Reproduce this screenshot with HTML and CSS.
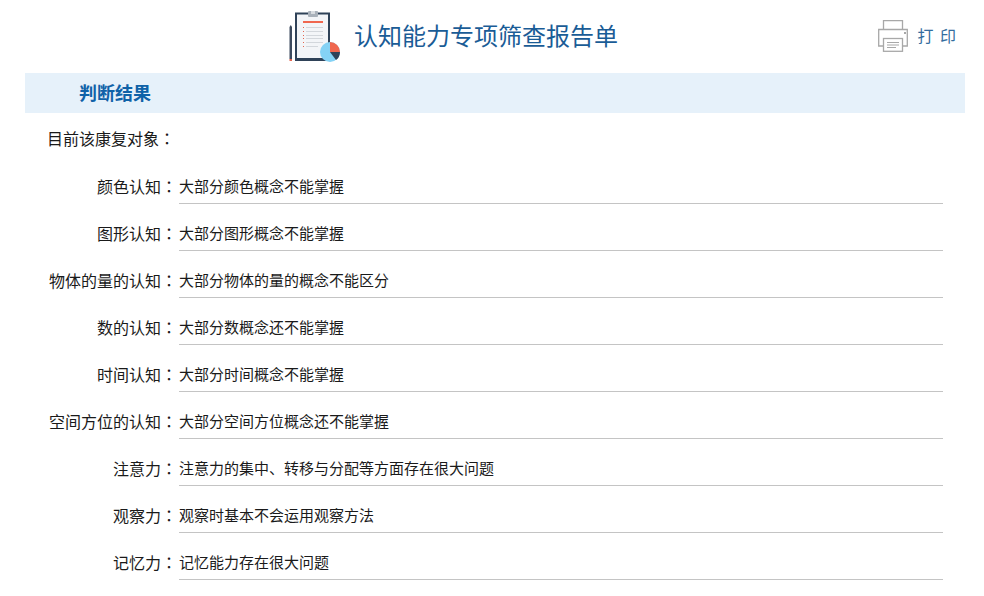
FILE: index.html
```html
<!DOCTYPE html>
<html lang="zh">
<head>
<meta charset="utf-8">
<title>认知能力专项筛查报告单</title>
<link rel="stylesheet" href="styles.css">
</head>
<body>
<header class="top">
  <svg class="logo" width="54" height="52" viewBox="0 10 54 52">
    <rect x="1.500" y="27" width="2.500" height="32" fill="#3c4a5e"/>
    <path d="M1.500 27 L2.800 25 L4 27Z" fill="#3c4a5e"/>
    <rect x="1.500" y="59" width="2.500" height="2" fill="#e2654f"/>
    <rect x="7" y="12.500" width="35" height="48.500" fill="#2f4258"/>
    <rect x="9" y="14.500" width="31" height="43.500" fill="#f3f5f8"/>
    <rect x="20" y="11" width="10" height="6" rx="1" fill="#a9b1ba"/>
    <rect x="23" y="11" width="4" height="3" fill="#d8dce0"/>
    <rect x="15" y="21" width="20" height="2" fill="#f0674f"/>
    <g fill="#e2654f">
      <rect x="15" y="27" width="1" height="1"/><rect x="15" y="31" width="1" height="1"/><rect x="15" y="35" width="1" height="1"/><rect x="15" y="38" width="1" height="1"/><rect x="15" y="42" width="1" height="1"/><rect x="15" y="46" width="1" height="1"/>
    </g>
    <g fill="#d3d7dc">
      <rect x="18" y="27" width="17" height="1"/><rect x="18" y="31" width="17" height="1"/><rect x="18" y="35" width="17" height="1"/><rect x="18" y="38" width="17" height="1"/><rect x="18" y="42" width="17" height="1"/><rect x="18" y="46" width="12" height="1"/>
    </g>
    <circle cx="42" cy="52" r="10" fill="#84d2f5"/>
    <path d="M42 52 L42 42 A10 10 0 0 1 52 52Z" fill="#f0674f"/>
    <path d="M42 52 L52 52 A10 10 0 0 1 48 60Z" fill="#2f4258"/>
  </svg>
  <h1 class="title">认知能力专项筛查报告单</h1>
  <div class="print">
    <svg class="print-icon" width="31" height="32" viewBox="0 0 31 32" fill="none" stroke="#a8a8a8" stroke-width="1.300">
      <path d="M5.500 9V.7H24.500V9"/>
      <path d="M5 26H.7V9.500H29.300V26H25"/>
      <rect x="5.500" y="18.500" width="19" height="12.800" fill="#fff"/>
      <path d="M9 22.500H21M9 25H21M9 27.500H18" stroke-width="1"/>
      <rect x="26" y="12" width="2" height="2" fill="#a8a8a8" stroke="none"/>
    </svg>
    <span class="print-text">打 印</span>
  </div>
</header>
<main class="report">
  <h2 class="banner">判断结果</h2>
  <p class="intro">目前该康复对象<span class="colon" lang="zh-Hant">：</span></p>
  <dl class="rows">
    <div class="row"><dt>颜色认知<span class="colon" lang="zh-Hant">：</span></dt><dd>大部分颜色概念不能掌握</dd></div>
    <div class="row"><dt>图形认知<span class="colon" lang="zh-Hant">：</span></dt><dd>大部分图形概念不能掌握</dd></div>
    <div class="row"><dt>物体的量的认知<span class="colon" lang="zh-Hant">：</span></dt><dd>大部分物体的量的概念不能区分</dd></div>
    <div class="row"><dt>数的认知<span class="colon" lang="zh-Hant">：</span></dt><dd>大部分数概念还不能掌握</dd></div>
    <div class="row"><dt>时间认知<span class="colon" lang="zh-Hant">：</span></dt><dd>大部分时间概念不能掌握</dd></div>
    <div class="row"><dt>空间方位的认知<span class="colon" lang="zh-Hant">：</span></dt><dd>大部分空间方位概念还不能掌握</dd></div>
    <div class="row"><dt>注意力<span class="colon" lang="zh-Hant">：</span></dt><dd>注意力的集中、转移与分配等方面存在很大问题</dd></div>
    <div class="row"><dt>观察力<span class="colon" lang="zh-Hant">：</span></dt><dd>观察时基本不会运用观察方法</dd></div>
    <div class="row"><dt>记忆力<span class="colon" lang="zh-Hant">：</span></dt><dd>记忆能力存在很大问题</dd></div>
  </dl>
</main>
</body>
</html>
```
FILE: styles.css
```css
* { box-sizing: border-box; }
html, body { margin: 0; padding: 0; background: #fff; overflow: hidden; }
body {
  font-family: "Noto Sans CJK SC", "Liberation Sans", sans-serif;
  color: #1a1a1a;
  height: 596px;
}
.top {
  display: flex;
  align-items: center;
  height: 73px;
  padding: 0 28px 3px 288px;
}
.logo { margin: 10px 12px 0 0; flex: none; align-self: flex-start; overflow: visible; }
.title {
  margin: 0;
  font-size: 24px;
  font-weight: 400;
  line-height: 40px;
  color: #1a5c96;
}
.print { margin-left: auto; display: flex; align-items: center; }
.print-icon { margin: 2px 8px 0 0; }
.print-text { font-size: 16px; color: #336d9e; white-space: pre; word-spacing: 3px; }
.report { margin: 0 19px 0 25px; }
.banner {
  margin: 0;
  height: 40px;
  line-height: 38px;
  padding-left: 54px;
  background: #e6f1fa;
  color: #0f62a8;
  font-size: 18px;
  font-weight: 700;
}
.intro {
  margin: 0 0 0 22px;
  height: 44px;
  line-height: 50px;
  font-size: 16px;
}
.colon { font-family: "Noto Sans CJK TC", sans-serif; }
.rows { margin: 0; }
.row { display: flex; height: 47px; padding-top: 12px; }
.row dt {
  width: 152px;
  text-align: right;
  font-size: 16px;
  line-height: 35px;
  flex: none;
}
.row dd {
  margin: 0 22px 0 2px;
  flex: 1;
  font-size: 15px;
  line-height: 33px;
  padding-bottom: 1px;
  border-bottom: 1px solid #c4c4c4;
}
```
